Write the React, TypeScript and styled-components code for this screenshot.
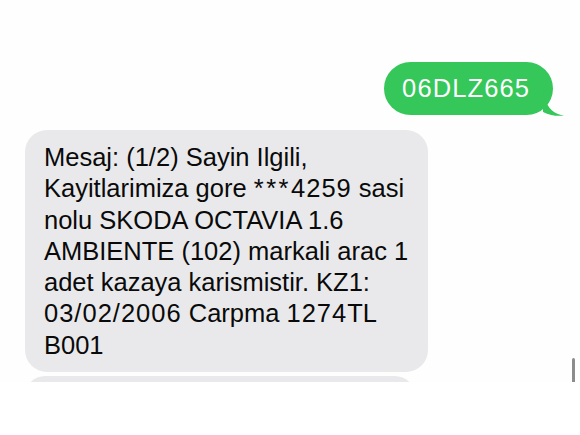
import styled, {createGlobalStyle} from 'styled-components';

const GlobalStyle = createGlobalStyle`
  html, body {
    margin: 0;
    padding: 0;
    background: #ffffff;
  }
  body {
    font-family: "Liberation Sans", Arial, Helvetica, sans-serif;
    -webkit-font-smoothing: antialiased;
  }
`;

export default function App() {
  return (
    <>
      <GlobalStyle />
      <Thread>
        <OutgoingRow>
          <SentBubble>
            06DLZ665
            <Tail width="22" height="28" viewBox="0 0 22 28">
              <path d="M0 0 C1 12 5 20 11 24 C14 26 17 27 21 27.5 C15 28.5 7 27.5 0 24 Z" fill="#35c759" />
            </Tail>
          </SentBubble>
        </OutgoingRow>

        <IncomingColumn>
          <ReceivedBubble>
            <Line>Mesaj: (1/2) Sayin Ilgili,</Line>
            <Line>
              Kayitlarimiza gore <Stars>***</Stars><Num>4259</Num> sasi
            </Line>
            <Line>nolu SKODA OCTAVIA 1.6</Line>
            <Line>AMBIENTE (102) markali arac 1</Line>
            <Line>adet kazaya karismistir. KZ1:</Line>
            <Line>
              <Num>03/02/2006</Num> Carpma <Num>1274</Num>TL
            </Line>
            <Line>B001</Line>
          </ReceivedBubble>
          <ReceivedBubble $peek />
        </IncomingColumn>

        <ScrollThumb />
      </Thread>
    </>
  );
}

const Thread = styled.div`
  position: relative;
  height: 382px;
  overflow: hidden;
  box-sizing: border-box;
  padding-top: 62px;
  background: #fefefe;
`;

const OutgoingRow = styled.div`
  display: flex;
  justify-content: flex-end;
  padding-right: 27px;
`;

const SentBubble = styled.div`
  position: relative;
  display: flex;
  align-items: center;
  box-sizing: border-box;
  height: 53px;
  padding: 0 23px 1px 18px;
  border-radius: 27px;
  background: #35c759;
  color: #ffffff;
  font-size: 25.5px;
  letter-spacing: 1.1px;
`;

const Tail = styled.svg`
  position: absolute;
  right: -12px;
  bottom: -1px;
`;

const IncomingColumn = styled.div`
  display: flex;
  flex-direction: column;
  align-items: flex-start;
  gap: 4px;
  margin-top: 15px;
  padding-left: 25px;
`;

const ReceivedBubble = styled.div<{$peek?: boolean}>`
  box-sizing: border-box;
  width: ${(p) => (p.$peek ? '390px' : '403px')};
  min-height: ${(p) => (p.$peek ? '40px' : '0')};
  padding: 12px 10px 11px 19px;
  border-radius: 22px;
  background: #e9e9eb;
  color: #0a0a0a;
  font-size: 25.5px;
  line-height: 31.3px;
`;

const Line = styled.div`
  white-space: nowrap;
`;

const Num = styled.span`
  letter-spacing: 1px;
`;

const Stars = styled.span`
  letter-spacing: 2.5px;
`;

const ScrollThumb = styled.div`
  position: absolute;
  right: 5px;
  bottom: 0;
  width: 3px;
  height: 24px;
  border-radius: 2px 2px 0 0;
  background: #8c8c8c;
`;
